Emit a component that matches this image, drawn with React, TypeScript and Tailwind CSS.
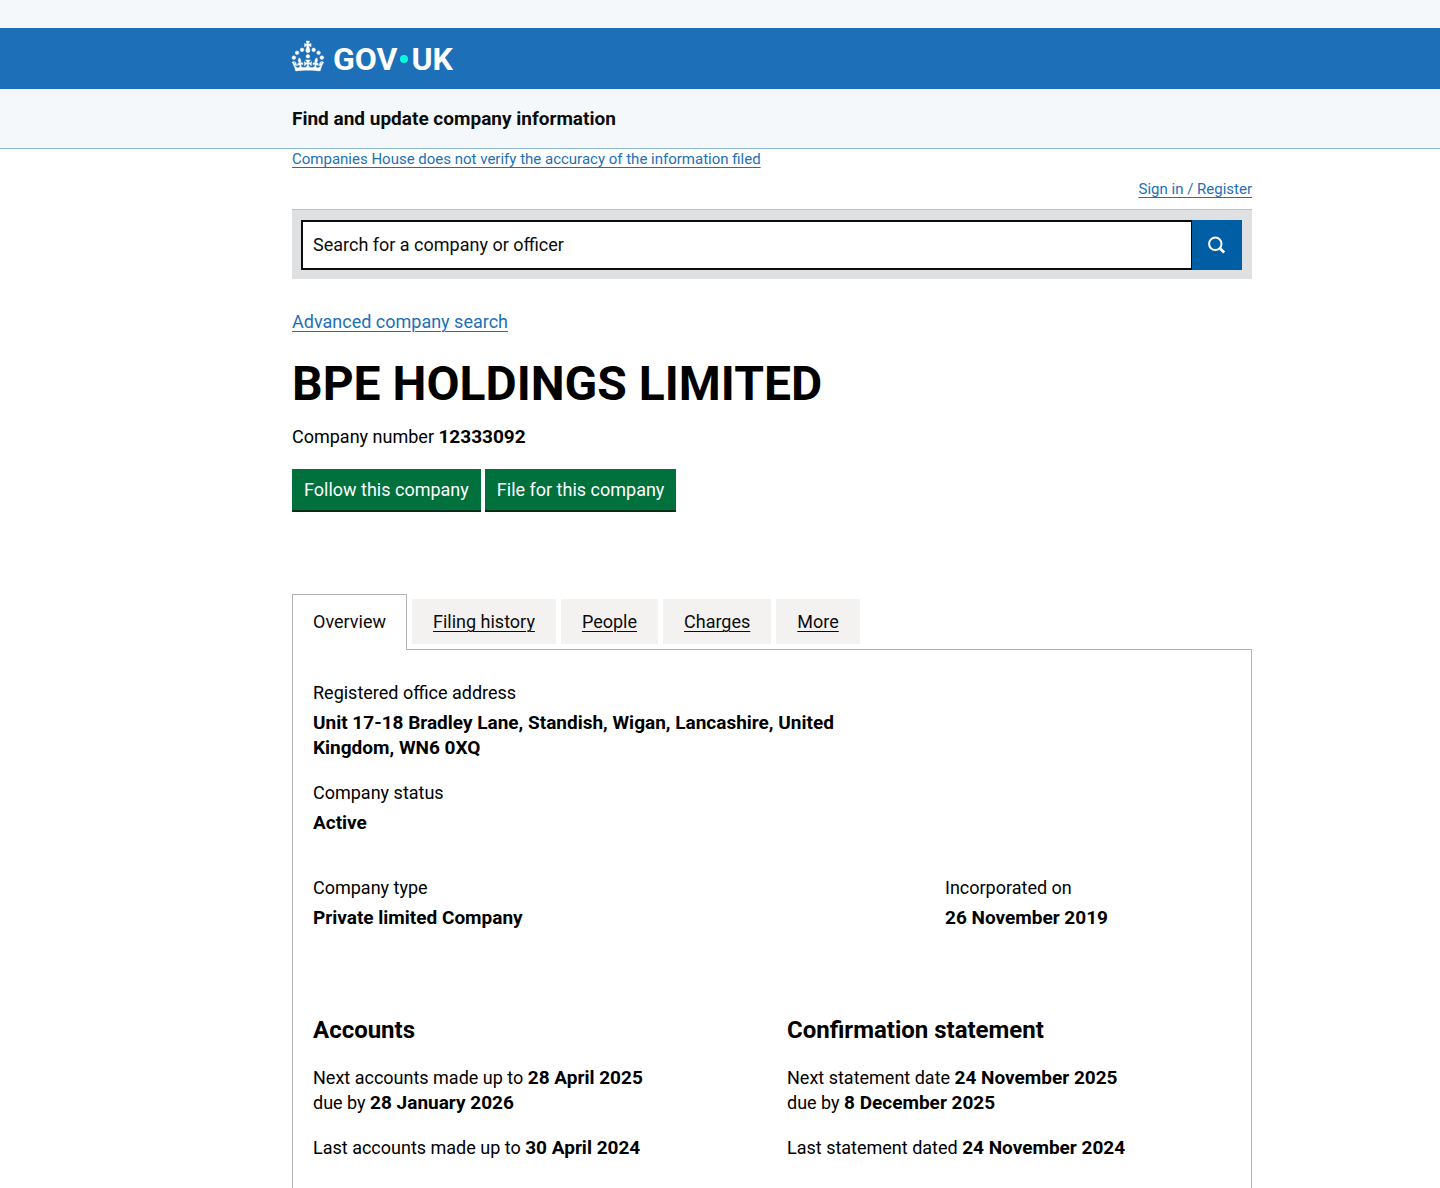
import type { ReactNode } from "react";

interface ContainerProps {
  className?: string;
  children: ReactNode;
}

/** Centred page column shared by the header bars and the main content. */
function Container({ className = "", children }: ContainerProps) {
  return (
    <div className="flex w-full grow flex-col pl-[104px]">
      <div className={`mx-auto w-full max-w-[960px] ${className}`}>{children}</div>
    </div>
  );
}

function Crown() {
  return (
    <svg
      viewBox="0 0 64 60"
      className="mb-1.5 h-[30px] w-8 overflow-visible fill-white stroke-white"
      strokeWidth="0.8"
      aria-hidden="true"
    >
      <circle cx="20" cy="17.6" r="3.7" />
      <circle cx="10.2" cy="23.5" r="3.7" />
      <circle cx="3.7" cy="33.2" r="3.7" />
      <circle cx="31.7" cy="30.6" r="3.7" />
      <circle cx="43.3" cy="17.6" r="3.7" />
      <circle cx="53.2" cy="23.5" r="3.7" />
      <circle cx="59.7" cy="33.2" r="3.7" />
      <path d="M33.1,9.8c.2-.1.3-.3.5-.5l4.6,2.4v-6.8l-4.6,1.5c-.1-.2-.3-.3-.5-.5l1.9-5.9h-6.7l1.9,5.9c-.2.1-.3.3-.5.5l-4.6-1.5v6.8l4.6-2.4c.1.2.3.3.5.5l-2.6,8c-.9,2.8,1.2,5.7,4.1,5.7h0c3,0,5.1-2.9,4.1-5.7l-2.6-8ZM37,37.9s-3.4,3.8-4.1,6.1c2.2,0,4.2-.5,6.4-2.8l-.7,8.5c-2-2.8-4.4-4.1-5.7-3.8.1,3.1.5,6.7,5.8,7.2,3.7.3,6.7-1.5,7-3.8.4-2.6-2-4.3-3.7-1.6-1.4-4.5,2.4-6.1,4.9-3.2-1.9-4.5-1.8-7.7,2.4-10.9,3,4,2.6,7.3-1.2,11.1,2.4-1.3,6.2,0,4,4.6-1.2-2.8-3.7-2.2-4.2.2-.3,1.7.7,3.7,3,4.2,1.9.3,4.7-.9,7-5.9-1.3,0-2.4.7-3.9,1.7l2.4-8c.6,2.3,1.4,3.7,2.2,4.5.6-1.6.5-2.8,0-5.3l5,1.8c-2.6,3.6-5.2,8.7-7.3,17.5-7.4-1.1-15.7-1.7-24.5-1.7h0c-8.8,0-17.1.6-24.5,1.7-2.1-8.9-4.7-13.9-7.3-17.5l5-1.8c-.5,2.5-.6,3.7,0,5.3.8-.8,1.6-2.3,2.2-4.5l2.4,8c-1.5-1-2.6-1.7-3.9-1.7,2.3,5,5.2,6.2,7,5.9,2.3-.4,3.3-2.4,3-4.2-.5-2.4-3-3.1-4.2-.2-2.2-4.6,1.6-6,4-4.6-3.7-3.7-4.2-7.1-1.2-11.1,4.2,3.2,4.3,6.4,2.4,10.9,2.5-2.8,6.3-1.3,4.9,3.2-1.8-2.7-4.1-1-3.7,1.6.3,2.3,3.3,4.1,7,3.8,5.4-.5,5.7-4.2,5.8-7.2-1.3-.2-3.7,1-5.7,3.8l-.7-8.5c2.2,2.3,4.2,2.7,6.4,2.8-.7-2.3-4.1-6.1-4.1-6.1h10.6,0Z" />
    </svg>
  );
}

const linkClass = "text-[#1d70b8] underline decoration-1 underline-offset-3";
const buttonClass = "border-b-2 border-[#002d18] bg-[#00703c] px-3 py-2";

const tabs = ["Filing history", "People", "Charges", "More"];

function Strong({ children }: { children: ReactNode }) {
  return <strong className="text-[19px] leading-none">{children}</strong>;
}

function Detail({ label, value }: { label: string; value: string }) {
  return (
    <dl>
      <dt>{label}</dt>
      <dd className="mt-[5px] text-[19px] leading-[25px] font-bold">{value}</dd>
    </dl>
  );
}

export default function App() {
  return (
    <div className="flex min-h-screen flex-col bg-white font-['Roboto',sans-serif] text-[18px] leading-[25px] text-[#0b0c0c]">
      <header>
        <div className="h-7 bg-[#f4f8fb]" />
        <div className="bg-[#1d70b8]">
          <Container className="flex h-[61px] items-center">
            <a href="#" className="flex items-center gap-[9px] text-white" aria-label="GOV.UK">
              <Crown />
              <span className="flex items-center gap-[3px] text-[32px] leading-8 font-bold">
                GOV
                <span className="size-2 rounded-full bg-[#00ffe0]" />
                UK
              </span>
            </a>
          </Container>
        </div>
        <div className="border-b border-[#8eb8dc] bg-[#f4f8fb]">
          <Container className="py-[17px]">
            <a href="#" className="text-[19px] leading-[25px] font-bold">
              Find and update company information
            </a>
          </Container>
        </div>
      </header>

      <Container className="flex grow flex-col">
        <div className="text-[15px] leading-5">
          <a href="#" className={linkClass}>
            Companies House does not verify the accuracy of the information filed
          </a>
        </div>
        <div className="mt-2.5 text-right text-[15px] leading-5">
          <a href="#" className={linkClass}>
            Sign in / Register
          </a>
        </div>

        <form className="mt-2.5 flex border-t border-[#bfc1c3] bg-[#dee0e2] pt-2.5 pr-2.5 pb-[9px] pl-[9px]">
          <input
            type="text"
            aria-label="Search for a company or officer"
            placeholder="Search for a company or officer"
            className="h-[50px] min-w-0 grow border-2 border-r border-[#0b0c0c] bg-white px-2.5 pb-0.5 placeholder:text-[#0b0c0c]"
          />
          <button
            type="submit"
            aria-label="Search"
            className="flex size-[50px] items-center justify-center bg-[#005ea5] text-white"
          >
            <svg viewBox="0 0 18 18" className="size-[18px]" fill="none" stroke="currentColor" aria-hidden="true">
              <circle cx="7.3" cy="7.8" r="6.2" strokeWidth="2" />
              <path d="M11.8 12.3 16.2 16.6" strokeWidth="2.8" />
            </svg>
          </button>
        </form>

        <div className="mt-[30px]">
          <a href="#" className={linkClass}>
            Advanced company search
          </a>
        </div>

        <main className="mt-[25px] flex grow flex-col text-black">
          <h1 className="text-5xl leading-[50px] font-bold">BPE HOLDINGS LIMITED</h1>
          <p className="mt-[15px]">
            Company number <Strong>12333092</Strong>
          </p>

          <div className="mt-5 flex gap-1 text-white">
            <button type="button" className={buttonClass}>
              Follow this company
            </button>
            <button type="button" className={buttonClass}>
              File for this company
            </button>
          </div>

          <nav className="mt-[82px] flex items-center gap-[5px] text-[#0b0c0c]" aria-label="Company">
            <a
              href="#"
              aria-current="page"
              className="relative -mb-px border border-b-0 border-[#b1b4b6] bg-white px-5 pt-3.5 pb-4"
            >
              Overview
            </a>
            {tabs.map((tab) => (
              <a
                key={tab}
                href="#"
                className="bg-[#f3f2f1] px-[21px] py-2.5 underline decoration-1 underline-offset-3"
              >
                {tab}
              </a>
            ))}
          </nav>

          <section className="grow border border-b-0 border-[#b1b4b6] px-5 py-[30px]">
            <div className="max-w-[540px] space-y-5">
              <Detail
                label="Registered office address"
                value="Unit 17-18 Bradley Lane, Standish, Wigan, Lancashire, United Kingdom, WN6 0XQ"
              />
              <Detail label="Company status" value="Active" />
            </div>

            <div className="mt-10 grid grid-cols-3 gap-x-[30px]">
              <div className="col-span-2">
                <Detail label="Company type" value="Private limited Company" />
              </div>
              <Detail label="Incorporated on" value="26 November 2019" />
            </div>

            <div className="mt-[85px] grid grid-cols-2 gap-x-[30px]">
              <div className="space-y-5">
                <h2 className="text-2xl leading-[30px] font-bold">Accounts</h2>
                <p>
                  Next accounts made up to <Strong>28 April 2025</Strong>
                  <br />
                  due by <Strong>28 January 2026</Strong>
                </p>
                <p>
                  Last accounts made up to <Strong>30 April 2024</Strong>
                </p>
              </div>
              <div className="space-y-5">
                <h2 className="text-2xl leading-[30px] font-bold">Confirmation statement</h2>
                <p>
                  Next statement date <Strong>24 November 2025</Strong>
                  <br />
                  due by <Strong>8 December 2025</Strong>
                </p>
                <p>
                  Last statement dated <Strong>24 November 2024</Strong>
                </p>
              </div>
            </div>
          </section>
        </main>
      </Container>
    </div>
  );
}
